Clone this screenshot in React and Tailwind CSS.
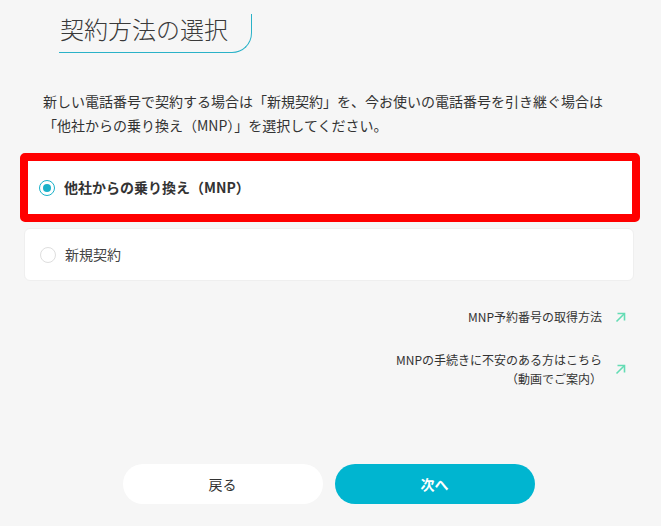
import React, { useState } from "react";

const font = { fontFamily: '"Noto Sans CJK JP", "Noto Sans", sans-serif' };

const Arrow = () => (
  <svg width="11" height="11" viewBox="0 0 11 11" fill="none" className="shrink-0">
    <path d="M1.5 9.5 L9 2" stroke="#63dcb4" strokeWidth="1.6" />
    <path d="M2.5 1.5 H9.5 V8.5" stroke="#63dcb4" strokeWidth="1.6" />
  </svg>
);

const Radio = ({ checked }) => (
  <span
    className={
      checked
        ? "flex h-[16px] w-[16px] items-center justify-center rounded-full border-[1.5px] border-[#1ab1c9] bg-white"
        : "flex h-[16px] w-[16px] items-center justify-center rounded-full border border-[#dedede] bg-white"
    }
  >
    {checked && <span className="h-[8px] w-[8px] rounded-full bg-[#1ab1c9]" />}
  </span>
);

export default function App() {
  const [plan, setPlan] = useState("mnp");

  return (
    <div className="min-h-[526px] w-full bg-[#f6f6f6] text-[#333]" style={font}>
      <div className="pt-[14px] pl-[59px]">
        <div className="flex h-[39px] w-[193px] items-start rounded-br-[20px] border-r-[1.5px] border-b-[1.5px] border-[#2ab2c8]">
          <h2 className="-mt-[3px] pl-[1px] text-[24px] font-light leading-[36px] text-[#3a3a3a]">契約方法の選択</h2>
        </div>
      </div>

      <p className="mt-[36px] pl-[43px] text-[14px] leading-[24px] text-[#333]">
        新しい電話番号で契約する場合は「新規契約」を、今お使いの電話番号を引き継ぐ場合は
        <br />
        「他社からの乗り換え（MNP）」を選択してください。
      </p>

      <div className="mt-[16px] flex flex-col gap-[6px]">
        <button
          onClick={() => setPlan("mnp")}
          className="mx-[20px] flex h-[69px] w-[620px] items-center gap-[9px] rounded-[5px] border-[8px] border-[#ff0000] bg-white pl-[11px] text-left"
        >
          <Radio checked={plan === "mnp"} />
          <span className="text-[14px] font-bold text-[#333]">他社からの乗り換え（MNP）</span>
        </button>
        <button
          onClick={() => setPlan("new")}
          className="mx-[24px] flex h-[53px] w-[610px] items-center gap-[9px] rounded-[6px] border border-[#efefef] bg-white pl-[15px] text-left"
        >
          <Radio checked={plan === "new"} />
          <span className="text-[14px] text-[#444]">新規契約</span>
        </button>
      </div>

      <div className="mt-[26px] flex flex-col items-end gap-[23px] pr-[35px]">
        <a className="flex items-center gap-[13px] text-[12px] leading-[20px] text-[#333]">
          <span>MNP予約番号の取得方法</span>
          <Arrow />
        </a>
        <a className="flex items-center gap-[13px] text-[12px] leading-[19px] text-[#333]">
          <span className="text-right">
            MNPの手続きに不安のある方はこちら
            <br />
            （動画でご案内）
          </span>
          <Arrow />
        </a>
      </div>

      <div className="mt-[76px] flex justify-center gap-[12px] pr-[4px]">
        <button className="h-[40px] w-[200px] rounded-full bg-white text-[14px] text-[#333]">戻る</button>
        <button className="h-[40px] w-[200px] rounded-full bg-[#00b5d0] text-[14px] font-bold text-white">次へ</button>
      </div>
    </div>
  );
}
